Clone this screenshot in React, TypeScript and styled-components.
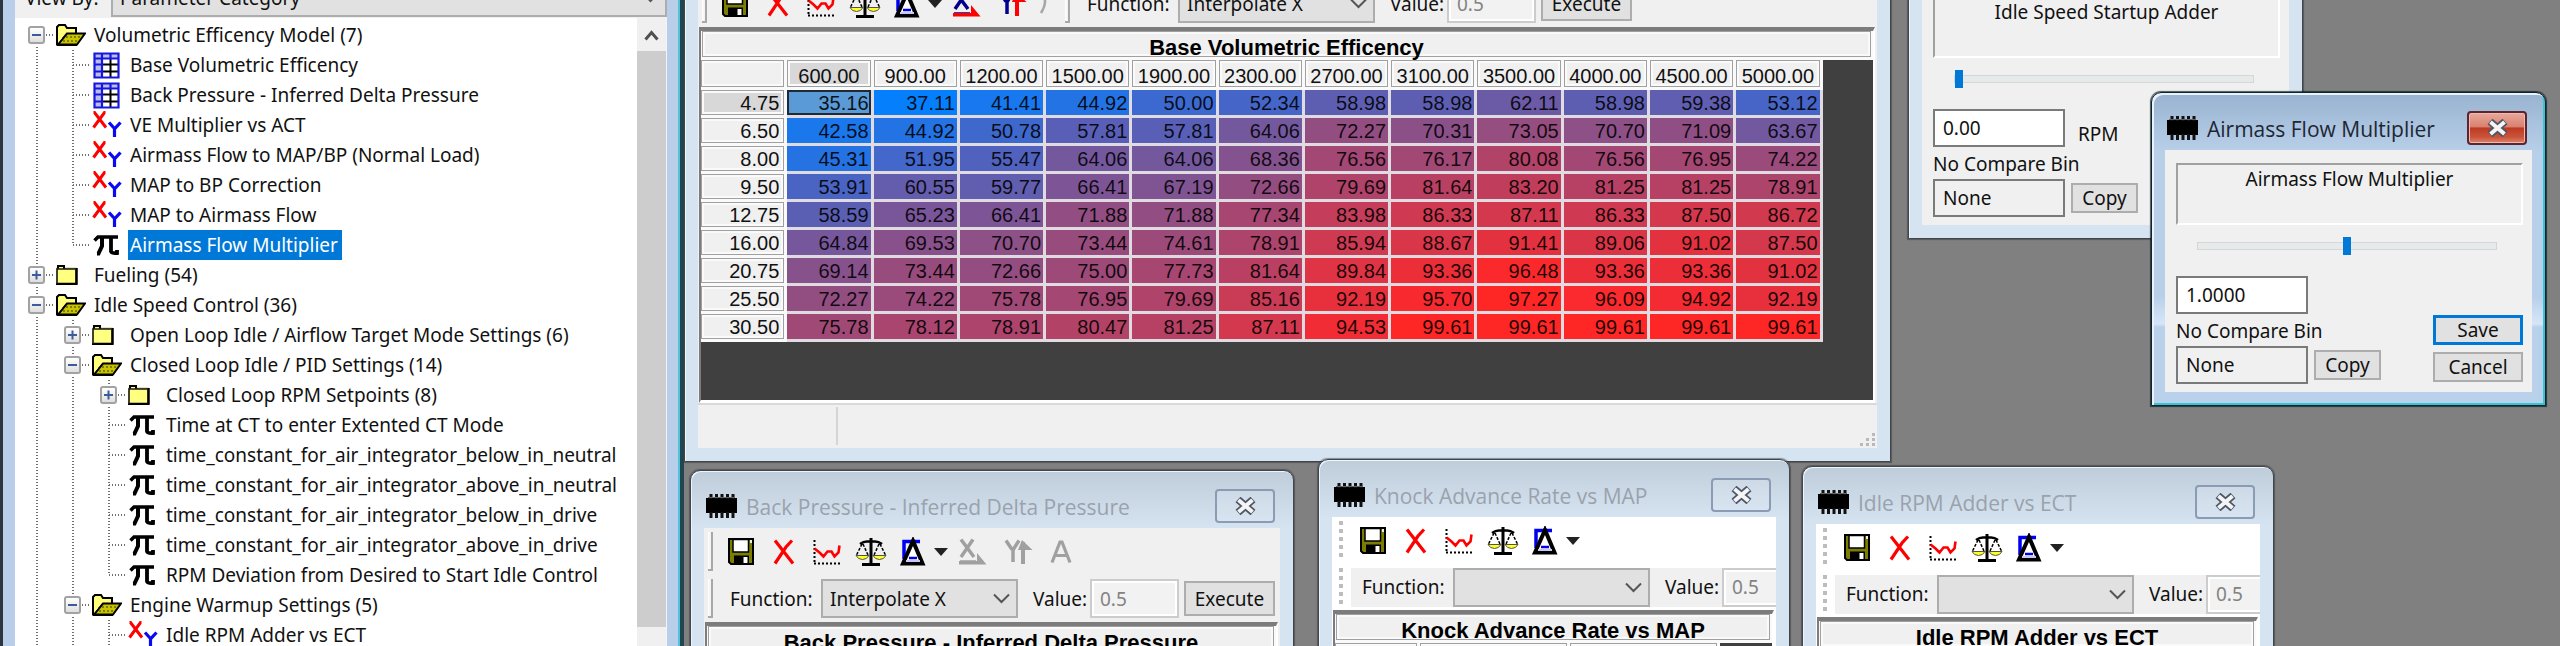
import React from "react";
import styled, { createGlobalStyle, css } from "styled-components";

const uiFont = `"Noto Sans", "Open Sans", sans-serif`;
const titleFont = `"Open Sans", "Noto Sans", sans-serif`;
const gridFont = `"Liberation Sans", Arial, sans-serif`;

const Global = createGlobalStyle`
  *, *::before, *::after { box-sizing: border-box; }
  body { margin: 0; background: #808080; font: 19px/24px ${uiFont}; color: #111; }
  button, input, select { font: inherit; color: inherit; margin: 0; }
`;

/* ---------- shell ---------- */

const Shell = styled.div`
  display: flex;
  height: 100vh;
  overflow: hidden;
`;

const Sidebar = styled.aside`
  flex: 0 0 684px;
  display: flex;
  padding: 0 13px 0 12px;
  background: #b9cfe9;
  border-left: 3px solid #2d3640;
  border-right: 4px solid #24454f;
  box-shadow: inset -2px 0 0 #4fc3d9;
  overflow: hidden;
`;

const SidebarBody = styled.div`
  flex: 1;
  display: flex;
  flex-direction: column;
  min-width: 0;
  background: #fff;
`;

const ViewBar = styled.div`
  display: flex;
  align-items: center;
  gap: 11px;
  height: 40px;
  margin-top: -22px;
  padding-left: 10px;
  padding-bottom: 1px;
  background: #f0f0f0;
`;

const ViewLabel = styled.label`
  flex: 0 0 75px;
  white-space: nowrap;
`;

const Workspace = styled.main`
  flex: 1;
  position: relative;
  overflow: hidden;
  background: #808080;
`;

/* ---------- tree ---------- */

const TreeArea = styled.div`
  flex: 1;
  display: flex;
  min-height: 0;
  overflow: hidden;
`;

const TreeList = styled.ul`
  flex: 1;
  min-width: 0;
  margin: 0;
  padding: 2px 0 0 4px;
  list-style: none;
  overflow: hidden;
`;

const TreeRow = styled.li`
  display: flex;
  height: 30px;
  white-space: nowrap;
`;

type Guide = "none" | "full" | "top" | "bottom";

const dotsV = "repeating-linear-gradient(to bottom, #6f6f6f 0 1px, transparent 1px 3px)";
const dotsH = "repeating-linear-gradient(to right, #6f6f6f 0 1px, transparent 1px 3px)";

const GuideCell = styled.span<{ $line: Guide; $branch?: boolean }>`
  flex: 0 0 36px;
  display: flex;
  align-items: center;
  justify-content: center;
  padding-right: 1px;
  background-repeat: no-repeat;
  ${(p) => {
    const size = p.$line === "full" ? "2px 100%" : p.$line === "none" ? "0 0" : "2px 50%";
    const pos = p.$line === "bottom" ? "17px 100%" : "17px 0";
    return css`
      background-image: ${dotsV}, ${dotsH};
      background-size: ${size}, ${p.$branch ? "18px 2px" : "0 0"};
      background-position: ${pos}, 18px 14px;
    `;
  }}
`;

const Expander = styled.button`
  display: grid;
  place-items: center;
  width: 17px;
  height: 18px;
  padding: 0;
  border: 2px solid #a2a2a2;
  border-radius: 3px;
  background: linear-gradient(#fff, #dedede);
  box-shadow: 0 0 0 1px #fff;
`;

const IconSlot = styled.span<{ $wide?: boolean }>`
  flex: 0 0 37px;
  display: flex;
  align-items: center;
  padding-left: ${(p) => (p.$wide ? 1 : 2)}px;
`;

const TreeLabel = styled.span<{ $selected?: boolean }>`
  height: 30px;
  line-height: 30px;
  padding: 0 4px 0 2px;
  ${(p) => p.$selected && css`background: #0078d7; color: #fff;`}
`;

const ScrollTrack = styled.div`
  flex: 0 0 30px;
  display: flex;
  flex-direction: column;
  border-right: 1px solid #f4f4f4;
  background: #f0f0f0;
`;

const ScrollUp = styled.button`
  display: grid;
  place-items: center;
  height: 33px;
  padding: 0;
  border: 0;
  background: #f0f0f0;
`;

const ScrollThumb = styled.div`
  flex: 1;
  margin-bottom: 19px;
  background: #cdcdcd;
`;

/* ---------- windows ---------- */

const WindowFrame = styled.section<{ $x: number; $y: number; $w: number; $active?: boolean }>`
  position: absolute;
  left: ${(p) => p.$x}px;
  top: ${(p) => p.$y}px;
  width: ${(p) => p.$w}px;
  padding: 0 13px 13px;
  border: 1px solid #3f464e;
  border-radius: 10px 10px 0 0;
  background: linear-gradient(#bfcddb, #d6e4f2 58px);
  box-shadow: inset 1px 1px 0 #eef5fb, 0 0 1px 1px rgba(50, 50, 50, 0.5);
  ${(p) =>
    p.$active &&
    css`
      background: linear-gradient(#98b3d0, #b8cfe9 58px, #b8cfe9 65%, #d6e6f8 74%, #b9d1ea 75%);
      border: 1px solid #10242a;
      box-shadow: inset 2px 2px 0 #e8f2fa, inset -2px -2px 0 #35c6d6, 0 0 1px 1px rgba(0, 20, 30, 0.7);
    `}
`;

const TitleBar = styled.header`
  display: flex;
  align-items: center;
  height: 57px;
  padding: 13px 5px 0 2px;
`;

const WindowTitle = styled.h1<{ $active?: boolean }>`
  flex: 1;
  margin: 2px 0 0 9px;
  font: 400 21px/28px ${titleFont};
  white-space: nowrap;
  color: ${(p) => (p.$active ? "#1d2733" : "#9aa2ac")};
`;

const CloseButton = styled.button<{ $active?: boolean }>`
  display: grid;
  place-items: center;
  width: 60px;
  height: 34px;
  padding: 0;
  border: 2px solid #8b9bb4;
  border-radius: 4px;
  background: rgba(255, 255, 255, 0.12);
  ${(p) =>
    p.$active &&
    css`
      border-color: #5e2430;
      background: linear-gradient(#e8a99c 0, #d9806f 46%, #bd3a22 50%, #c9543a 80%, #dc8468 100%);
      box-shadow: inset 0 0 0 1px #eebab0;
    `}
`;

const WindowBody = styled.div<{ $white?: boolean }>`
  background: ${(p) => (p.$white ? "#fff" : "#f0f0f0")};
  overflow: hidden;
`;

/* ---------- toolbars ---------- */

const ToolRow = styled.div<{ $compact?: boolean }>`
  display: flex;
  align-items: center;
  height: ${(p) => (p.$compact ? 46 : 47)}px;
  white-space: nowrap;
`;

const Gripper = styled.span<{ $dotted?: boolean }>`
  flex: none;
  align-self: center;
  height: 39px;
  ${(p) =>
    p.$dotted
      ? css`
          width: 4px;
          margin: 0 8px 0 7px;
          background: repeating-linear-gradient(to bottom, #bdbdbd 0 4px, transparent 4px 8px);
        `
      : css`
          width: 5px;
          margin: 0 6px 0 4px;
          border: solid #a8a8a8;
          border-width: 0 2px 2px 0;
          background: linear-gradient(to right, #fff, #f0f0f0);
        `}
`;

const ToolButton = styled.button<{ $w?: number }>`
  flex: none;
  display: flex;
  align-items: center;
  justify-content: center;
  width: ${(p) => p.$w ?? 43}px;
  height: 38px;
  padding: 0;
  border: 0;
  background: none;
`;

const FunctionStrip = styled.div<{ $fill?: boolean }>`
  flex: 1 0 auto;
  display: flex;
  align-items: center;
  height: 39px;
  background: #f0f0f0;
  padding-left: 11px;
`;

const FieldLabel = styled.label<{ $w: number; $lead?: number }>`
  flex: none;
  width: ${(p) => p.$w}px;
  margin-left: ${(p) => p.$lead ?? 0}px;
`;

const SelectBox = styled.span<{ $grow?: boolean }>`
  position: relative;
  flex: ${(p) => (p.$grow ? "1" : "0 0 197px")};
  display: flex;
  height: 39px;
  & > select {
    width: 100%;
    padding: 0 7px;
    appearance: none;
    border: 2px solid #adadad;
    border-radius: 0;
    background: #e1e1e1;
    opacity: 1;
  }
  & > svg {
    position: absolute;
    right: 8px;
    top: 14px;
    pointer-events: none;
  }
`;

const ValueInput = styled.input`
  flex: none;
  width: 89px;
  height: 39px;
  padding: 0 8px;
  border: 2px solid #cccccc;
  background: #f2f2f2;
  box-shadow: inset 0 0 0 2px #fff;
  color: #838383;
`;

const PushButton = styled.button<{ $w: number; $h?: number; $primary?: boolean }>`
  flex: none;
  width: ${(p) => p.$w}px;
  height: ${(p) => p.$h ?? 30}px;
  padding: 0;
  line-height: 24px;
  border: ${(p) => (p.$primary ? "3px solid #0078d7" : "2px solid #adadad")};
  background: #e1e1e1;
`;

const ExecuteButton = styled(PushButton)`
  margin-left: 5px;
`;

/* ---------- data grid ---------- */

const GridFrame = styled.div<{ $h: number }>`
  height: ${(p) => p.$h}px;
  margin: 0 2px 0 1px;
  border: solid #fff;
  border-width: 4px 2px 3px 2px;
  border-top-color: #7c7c7c;
  border-left-color: #7c7c7c;
  background: #404040;
  overflow: hidden;
`;

const GridTitle = styled.h2`
  height: 29px;
  margin: 0;
  border: solid #fafafa;
  border-width: 0 2px 3px 1px;
  background: #f0f0f0;
  box-shadow: inset 0 0 0 1px #a0a0a0, inset 0 0 0 3px #fafafa;
  font: 700 22px/34px ${gridFont};
  text-align: center;
  white-space: nowrap;
  color: #000;
`;

const DataTable = styled.table<{ $w: string }>`
  width: ${(p) => p.$w};
  table-layout: fixed;
  border-collapse: separate;
  border-spacing: 0;
  font: 20px/24px ${gridFont};
`;

const headCell = css`
  height: 28px;
  font-weight: 400;
  border: solid #fafafa;
  border-width: 0 3px 3px 0;
  box-shadow: inset 0 0 0 1px #a0a0a0, inset 0 0 0 3px #fafafa;
`;

const ColHead = styled.th<{ $on?: boolean }>`
  ${headCell}
  height: 30px;
  padding: 5px 0 0;
  line-height: 22px;
  text-align: center;
  background: ${(p) => (p.$on ? "#d8d8d8" : "#f0f0f0")};
`;

const RowHead = styled.th<{ $on?: boolean }>`
  ${headCell}
  padding: 1px 5px 0 0;
  text-align: right;
  background: ${(p) => (p.$on ? "#d8d8d8" : "#f0f0f0")};
`;

const ValueCell = styled.td<{ $on?: boolean }>`
  height: 28px;
  padding: 0 2px 0 0;
  border: solid #e0dbe0;
  border-width: 0 3px 3px 0;
  text-align: right;
  color: rgba(0, 0, 0, 0.88);
  ${(p) => p.$on && css`box-shadow: inset 0 0 0 2px #1d2b38;`}
`;

const StatusBar = styled.footer`
  display: flex;
  align-items: flex-end;
  justify-content: space-between;
  height: 45px;
  border-top: 2px solid #d9d9d9;
  background: #f0f0f0;
`;

const StatusCell = styled.span`
  width: 140px;
  height: 38px;
  margin-bottom: 3px;
  border-right: 2px solid #d5d5d5;
`;

/* ---------- value dialogs ---------- */

const DialogBody = styled(WindowBody)`
  padding: 13px 9px 8px 11px;
`;

const Caption = styled.div`
  height: 62px;
  padding-top: 2px;
  border: 2px solid #fff;
  border-top-color: #a0a0a0;
  border-left-color: #a0a0a0;
  text-align: center;
`;

const Slider = styled.input`
  display: block;
  width: 300px;
  height: 18px;
  margin: 12px auto 0 21px;
  appearance: none;
  background: none;
  &::-webkit-slider-runnable-track {
    height: 8px;
    background: #e7eaea;
    border: 1px solid #d6d6d6;
  }
  &::-webkit-slider-thumb {
    appearance: none;
    width: 8px;
    height: 18px;
    margin-top: -6px;
    border-radius: 0;
    background: #0078d7;
  }
`;

const DialogFields = styled.div`
  display: flex;
  justify-content: space-between;
  align-items: flex-end;
  margin-top: 21px;
`;

const FieldColumn = styled.div`
  display: flex;
  flex-direction: column;
`;

const FieldLine = styled.div<{ $gap: number }>`
  display: flex;
  align-items: center;
  gap: ${(p) => p.$gap}px;
`;

const UnitLabel = styled.span`
  padding-top: 12px;
`;

const TextBox = styled.input`
  width: 132px;
  height: 38px;
  padding: 0 8px;
  border: 2px solid #7a7a7a;
  background: #fff;
  &:read-only {
    background: #f0f0f0;
  }
`;

const CompareLabel = styled.label`
  height: 32px;
  line-height: 34px;
`;

const ActionColumn = styled.div`
  display: flex;
  flex-direction: column;
  gap: 7px;
  padding-bottom: 2px;
`;

/* ---------- drawings ---------- */

const ChipIcon = () => (
  <svg width="31" height="24" viewBox="0 0 31 24" aria-hidden="true">
    <path d="M0 4h31v15H0z" fill="#000" />
    <path d="M5 0v5M10.500 0v5M16 0v5M21.500 0v5M27 0v5M5 18v6M10.500 18v6M16 18v6M21.500 18v6M27 18v6" stroke="#111" strokeWidth="3" />
    <path d="M2 3.500h27" stroke="#666" />
  </svg>
);

const CloseGlyph = () => (
  <svg width="23" height="18" viewBox="0 0 23 18" aria-hidden="true">
    <path d="M4 2.500L19 15.500M19 2.500L4 15.500" stroke="#4c5566" strokeWidth="7.500" />
    <path d="M4.500 3L18.500 15M18.500 3L4.500 15" stroke="#f4f4f4" strokeWidth="4" />
  </svg>
);

const Chevron = () => (
  <svg width="17" height="11" viewBox="0 0 17 11" aria-hidden="true">
    <path d="M1 1.500l7.500 7.500L16 1.500" fill="none" stroke="#555" strokeWidth="2" />
  </svg>
);

const OpenFolder = () => (
  <svg width="30" height="22" viewBox="0 0 30 22" aria-hidden="true">
    <path d="M1 20V3l2-2h6l2 3h9v6" fill="#ffff7a" stroke="#000" strokeWidth="2" />
    <path d="M2 20.500L11 9.500h18L21 20.500z" fill="#c9c400" stroke="#000" strokeWidth="2" />
    <path d="M1 20V6l5 8z" fill="#ffff7a" />
    <path d="M10 13h15M7 17h14" stroke="#6b6800" strokeWidth="1.500" strokeDasharray="2 2" />
    <path d="M1 21V3M1 21h20" stroke="#000" strokeWidth="2" />
  </svg>
);

const ClosedFolder = () => (
  <svg width="22" height="20" viewBox="0 0 22 20" aria-hidden="true">
    <path d="M1 19V3.500h19V19z" fill="#ffff80" stroke="#8a8a20" strokeWidth="1.500" />
    <path d="M2 4V1h6v3" fill="#ffff80" stroke="#000" strokeWidth="2" />
    <path d="M20.500 3v16.500M0 19h21.500" stroke="#000" strokeWidth="2.500" />
    <path d="M1 19V4h19" fill="none" stroke="#222" strokeWidth="1.500" />
  </svg>
);

const TableIcon = () => (
  <svg width="27" height="27" viewBox="0 0 27 27" aria-hidden="true">
    <path d="M1 1h25v25H1z" fill="#fff" />
    <path d="M1 1h25v5H1zM1 1h7v25H1z" fill="#b9bde8" />
    <path d="M9 12.500h17M9 19.500h17M17.500 7v19" stroke="#000" strokeWidth="2" />
    <path d="M1.500 1.500h24v24h-24zM1.500 6.500h24M9 1.500v24M17.500 1.500v5M1.500 12.500H9M1.500 19.500H9" fill="none" stroke="#1616e0" strokeWidth="2.200" />
  </svg>
);

const XYIcon = () => (
  <svg width="31" height="28" viewBox="0 0 31 28" aria-hidden="true">
    <path d="M1.500 1.500h1L14 16.500M13.500 1.500h-1L1.500 16.500" fill="none" stroke="#f00" strokeWidth="3" />
    <path d="M17 11.500l5 5.500M28.500 11.500L22.500 18v8" fill="none" stroke="#0a0af0" strokeWidth="3.200" />
  </svg>
);

const PiIcon = () => (
  <svg width="26" height="22" viewBox="0 0 26 22" aria-hidden="true">
    <path d="M1.500 6.500L5 3h20" fill="none" stroke="#000" strokeWidth="3.500" />
    <path d="M9 3v9L5.500 19.500H4" fill="none" stroke="#000" strokeWidth="4" />
    <path d="M18 3v14.500q1 2 6 1.500v-3" fill="none" stroke="#000" strokeWidth="3.800" />
  </svg>
);

const PlusMinus = ({ open }: { open: boolean }) => (
  <svg width="11" height="12" viewBox="0 0 11 12" aria-hidden="true">
    <path d={open ? "M1 6h9" : "M1 6h9M5.500 1.500v9"} stroke="#3d5a9c" strokeWidth="2" />
  </svg>
);

const FloppyIcon = () => (
  <svg width="26" height="27" viewBox="0 0 26 27" aria-hidden="true">
    <path d="M1 1h24v25H3l-2-2z" fill="#7d7d00" stroke="#000" strokeWidth="2" />
    <path d="M5 1.500h15.500V14H5z" fill="#fff" stroke="#000" strokeWidth="1.500" />
    <path d="M22 2h2v3h-2z" fill="#eee" />
    <path d="M6 17.500h15V26H6z" fill="#000" />
    <path d="M15.500 19h4v6h-4z" fill="#fff" />
  </svg>
);

const RedXIcon = () => (
  <svg width="22" height="26" viewBox="0 0 22 26" aria-hidden="true">
    <path d="M2 1.500L20 24.500M19 1.500L13 8 2 24.500" fill="none" stroke="#f00" strokeWidth="3.200" />
  </svg>
);

const GraphIcon = () => (
  <svg width="28" height="27" viewBox="0 0 28 27" aria-hidden="true">
    <path d="M1.500 2v24M1 25.500h27" stroke="#000" strokeWidth="2" strokeDasharray="2 2" />
    <path d="M1.500 10.500l5 4 4 4 4-5h4l3 5 4-4 1-7" fill="none" stroke="#f00" strokeWidth="2.600" />
  </svg>
);

const ScalesIcon = () => (
  <svg width="32" height="29" viewBox="0 0 32 29" aria-hidden="true">
    <path d="M1 18.500h13q-2 4-6.500 4T1 18.500zM18 18.500h13q-2 4-6.500 4t-6.500-4z" fill="#ffff2a" stroke="#554" />
    <path d="M16 1v26M7 27.500h18" stroke="#000" strokeWidth="3" />
    <path d="M5 7q4-3 8-2.500h6q4-.5 8 2.500" fill="none" stroke="#000" strokeWidth="2.500" />
    <path d="M7 7l-5.500 11M8 7l5 11M24 7l-5 11M25 7l5.500 11" stroke="#000" strokeWidth="1.500" strokeDasharray="3 1.500" />
  </svg>
);

const DeltaIcon = () => (
  <svg width="27" height="29" viewBox="0 0 27 29" aria-hidden="true">
    <path d="M20 4.500H4V22" fill="none" stroke="#0000f0" strokeWidth="3.500" />
    <path d="M3 26.500L13 4l9.500 22.500z" fill="#fff" stroke="#000" strokeWidth="4" />
    <path d="M9 21h8" stroke="#0000f0" strokeWidth="2.500" />
    <path d="M6 24h14" stroke="#c8c8f4" strokeWidth="2" />
    <path d="M11 4l2-4 2 4z" />
  </svg>
);

const DropArrow = () => (
  <svg width="14" height="8" viewBox="0 0 14 8" aria-hidden="true">
    <path d="M0 0h14L7 8z" fill="#222" />
  </svg>
);

const ScaleXIcon = ({ off }: { off?: boolean }) => (
  <svg width="29" height="27" viewBox="0 0 29 27" aria-hidden="true">
    <path d="M3 1.500L16 19M15 1.500L3 19M2 24h16" fill="none" stroke={off ? "#a0a0a0" : "#00008c"} strokeWidth="3.500" />
    <path d="M1 23h18v-8l9.500 11.500H1z" fill={off ? "#a0a0a0" : "#f00"} />
  </svg>
);

const ScaleYIcon = ({ off }: { off?: boolean }) => (
  <svg width="29" height="27" viewBox="0 0 29 27" aria-hidden="true">
    <path d="M2 2.500l6 9M15 2.500L9 12v12" fill="none" stroke={off ? "#a0a0a0" : "#00008c"} strokeWidth="3.500" />
    <path d="M19 4v22" stroke={off ? "#a0a0a0" : "#f00"} strokeWidth="4" />
    <path d="M18 2l10.500 10H14z" fill={off ? "#a0a0a0" : "#f00"} />
  </svg>
);

const LetterIcon = () => (
  <svg width="22" height="24" viewBox="0 0 22 24" aria-hidden="true">
    <path d="M2 22.500L10 2h2l8 20.500M5 15.500h12" fill="none" stroke="#a0a0a0" strokeWidth="3.200" />
  </svg>
);

const CurveIcon = () => (
  <svg width="22" height="24" viewBox="0 0 22 24" aria-hidden="true">
    <path d="M4 1.500Q12 8 4 21" fill="none" stroke="#a6a6a6" strokeWidth="2.500" />
  </svg>
);

const GripDots = () => (
  <svg width="18" height="16" viewBox="0 0 18 16" aria-hidden="true">
    <path d="M13 1h3v3h-3zM7 6h3v3H7zM13 6h3v3h-3zM1 11h3v3H1zM7 11h3v3H7zM13 11h3v3h-3z" fill="#b9b9b9" />
  </svg>
);

/* ---------- data ---------- */

type Kind = "open" | "closed" | "table" | "xy" | "pi";
type Node = { text: string; kind: Kind; guides: Guide[]; selected?: boolean };

const tree: Node[] = [
  { text: "Volumetric Efficency Model (7)", kind: "open", guides: ["bottom"] },
  { text: "Base Volumetric Efficency", kind: "table", guides: ["full", "full"] },
  { text: "Back Pressure - Inferred Delta Pressure", kind: "table", guides: ["full", "full"] },
  { text: "VE Multiplier vs ACT", kind: "xy", guides: ["full", "full"] },
  { text: "Airmass Flow to MAP/BP (Normal Load)", kind: "xy", guides: ["full", "full"] },
  { text: "MAP to BP Correction", kind: "xy", guides: ["full", "full"] },
  { text: "MAP to Airmass Flow", kind: "xy", guides: ["full", "full"] },
  { text: "Airmass Flow Multiplier", kind: "pi", guides: ["full", "top"], selected: true },
  { text: "Fueling (54)", kind: "closed", guides: ["full"] },
  { text: "Idle Speed Control (36)", kind: "open", guides: ["full"] },
  { text: "Open Loop Idle / Airflow Target Mode Settings (6)", kind: "closed", guides: ["full", "full"] },
  { text: "Closed Loop Idle / PID Settings (14)", kind: "open", guides: ["full", "full"] },
  { text: "Closed Loop RPM Setpoints (8)", kind: "closed", guides: ["full", "full", "full"] },
  { text: "Time at CT to enter Extented CT Mode", kind: "pi", guides: ["full", "full", "full"] },
  { text: "time_constant_for_air_integrator_below_in_neutral", kind: "pi", guides: ["full", "full", "full"] },
  { text: "time_constant_for_air_integrator_above_in_neutral", kind: "pi", guides: ["full", "full", "full"] },
  { text: "time_constant_for_air_integrator_below_in_drive", kind: "pi", guides: ["full", "full", "full"] },
  { text: "time_constant_for_air_integrator_above_in_drive", kind: "pi", guides: ["full", "full", "full"] },
  { text: "RPM Deviation from Desired to Start Idle Control", kind: "pi", guides: ["full", "full", "top"] },
  { text: "Engine Warmup Settings (5)", kind: "open", guides: ["full", "full"] },
  { text: "Idle RPM Adder vs ECT", kind: "xy", guides: ["full", "full", "full"] },
];

const nodeIcon: Record<Kind, React.ReactNode> = {
  open: <OpenFolder />,
  closed: <ClosedFolder />,
  table: <TableIcon />,
  xy: <XYIcon />,
  pi: <PiIcon />,
};

const rpm = ["600.00", "900.00", "1200.00", "1500.00", "1900.00", "2300.00", "2700.00", "3100.00", "3500.00", "4000.00", "4500.00", "5000.00"];

const efficiency: [string, number[]][] = [
  ["4.75", [35.16, 37.11, 41.41, 44.92, 50.0, 52.34, 58.98, 58.98, 62.11, 58.98, 59.38, 53.12]],
  ["6.50", [42.58, 44.92, 50.78, 57.81, 57.81, 64.06, 72.27, 70.31, 73.05, 70.7, 71.09, 63.67]],
  ["8.00", [45.31, 51.95, 55.47, 64.06, 64.06, 68.36, 76.56, 76.17, 80.08, 76.56, 76.95, 74.22]],
  ["9.50", [53.91, 60.55, 59.77, 66.41, 67.19, 72.66, 79.69, 81.64, 83.2, 81.25, 81.25, 78.91]],
  ["12.75", [58.59, 65.23, 66.41, 71.88, 71.88, 77.34, 83.98, 86.33, 87.11, 86.33, 87.5, 86.72]],
  ["16.00", [64.84, 69.53, 70.7, 73.44, 74.61, 78.91, 85.94, 88.67, 91.41, 89.06, 91.02, 87.5]],
  ["20.75", [69.14, 73.44, 72.66, 75.0, 77.73, 81.64, 89.84, 93.36, 96.48, 93.36, 93.36, 91.02]],
  ["25.50", [72.27, 74.22, 75.78, 76.95, 79.69, 85.16, 92.19, 95.7, 97.27, 96.09, 94.92, 92.19]],
  ["30.50", [75.78, 78.12, 78.91, 80.47, 81.25, 87.11, 94.53, 99.61, 99.61, 99.61, 99.61, 99.61]],
];

const stops: [number, number, number, number][] = [
  [37, 6, 127, 253],
  [45, 36, 115, 228],
  [50, 60, 105, 208],
  [59, 93, 94, 178],
  [64, 116, 88, 158],
  [72, 146, 78, 130],
  [79, 172, 68, 108],
  [86, 206, 58, 82],
  [93.4, 236, 46, 56],
  [97, 255, 40, 42],
];

function heat(v: number) {
  if (v <= stops[0][0]) return `rgb(${stops[0].slice(1).join(",")})`;
  for (let i = 1; i < stops.length; i++) {
    if (v <= stops[i][0]) {
      const a = stops[i - 1];
      const b = stops[i];
      const t = (v - a[0]) / (b[0] - a[0]);
      return `rgb(${[1, 2, 3].map((k) => Math.round(a[k] + (b[k] - a[k]) * t)).join(",")})`;
    }
  }
  return "rgb(255,38,38)";
}

/* ---------- parts ---------- */

function Tree() {
  return (
    <TreeList>
      {tree.map((n) => {
        const folder = n.kind === "open" || n.kind === "closed";
        const last = n.guides.length - 1;
        return (
          <TreeRow key={n.text}>
            {n.guides.map((g, i) => (
              <GuideCell key={i} $line={g} $branch={i === last}>
                {i === last && folder && (
                  <Expander type="button" aria-label={n.text}>
                    <PlusMinus open={n.kind === "open"} />
                  </Expander>
                )}
              </GuideCell>
            ))}
            <IconSlot $wide={folder || n.kind === "xy"}>{nodeIcon[n.kind]}</IconSlot>
            <TreeLabel $selected={n.selected}>{n.text}</TreeLabel>
          </TreeRow>
        );
      })}
    </TreeList>
  );
}

type WinProps = {
  title: string;
  x: number;
  y: number;
  w: number;
  active?: boolean;
  children: React.ReactNode;
};

function Win({ title, x, y, w, active, children }: WinProps) {
  return (
    <WindowFrame $x={x} $y={y} $w={w} $active={active}>
      <TitleBar>
        <ChipIcon />
        <WindowTitle $active={active}>{title}</WindowTitle>
        <CloseButton type="button" aria-label="Close" $active={active}>
          <CloseGlyph />
        </CloseButton>
      </TitleBar>
      {children}
    </WindowFrame>
  );
}

function BasicTools() {
  return (
    <>
      <ToolButton type="button" aria-label="Save"><FloppyIcon /></ToolButton>
      <ToolButton type="button" aria-label="Discard"><RedXIcon /></ToolButton>
      <ToolButton type="button" aria-label="Graph" $w={44}><GraphIcon /></ToolButton>
      <ToolButton type="button" aria-label="Compare" $w={44}><ScalesIcon /></ToolButton>
      <ToolButton type="button" aria-label="Difference" $w={41}><DeltaIcon /></ToolButton>
      <ToolButton type="button" aria-label="Difference options" $w={14}><DropArrow /></ToolButton>
    </>
  );
}

function ScaleTools({ off }: { off?: boolean }) {
  return (
    <>
      <ToolButton type="button" aria-label="Scale X" $w={49}><ScaleXIcon off={off} /></ToolButton>
      <ToolButton type="button" aria-label="Scale Y"><ScaleYIcon off={off} /></ToolButton>
      <ToolButton type="button" aria-label="Auto" $w={off ? 41 : 27}>{off ? <LetterIcon /> : <CurveIcon />}</ToolButton>
    </>
  );
}

function FunctionFields({ id, value }: { id: string; value?: string }) {
  return (
    <>
      <FieldLabel htmlFor={`${id}-fn`} $w={91}>Function:</FieldLabel>
      <SelectBox>
        <select id={`${id}-fn`} defaultValue={value ?? ""}>
          <option>{value ?? ""}</option>
        </select>
        <Chevron />
      </SelectBox>
      <FieldLabel htmlFor={`${id}-val`} $w={57} $lead={15}>Value:</FieldLabel>
      <ValueInput id={`${id}-val`} defaultValue="0.5" disabled />
    </>
  );
}

function CurveWindow({ title, id, x, y }: { title: string; id: string; x: number; y: number }) {
  return (
    <Win title={title} x={x} y={y} w={472}>
      <WindowBody $white>
        <ToolRow>
          <Gripper $dotted />
          <BasicTools />
        </ToolRow>
        <ToolRow $compact>
          <Gripper $dotted />
          <FunctionStrip>
            <FunctionFields id={id} />
          </FunctionStrip>
        </ToolRow>
        <GridFrame $h={200}>
          <GridTitle>{title}</GridTitle>
          <DataTable $w="88%">
            <colgroup>
              <col width="22%" />
              <col width="39%" />
              <col width="39%" />
            </colgroup>
            <tbody>
              <tr>
                <ColHead />
                <ColHead />
                <ColHead />
              </tr>
            </tbody>
          </DataTable>
        </GridFrame>
      </WindowBody>
    </Win>
  );
}

type DialogProps = {
  id: string;
  title: string;
  x: number;
  y: number;
  value: string;
  level: number;
  unit?: string;
  active?: boolean;
  actions?: boolean;
};

function ValueDialog({ id, title, x, y, value, level, unit, active, actions }: DialogProps) {
  return (
    <Win title={title} x={x} y={y} w={395} active={active}>
      <DialogBody>
        <Caption>{title}</Caption>
        <Slider type="range" min={0} max={100} defaultValue={level} aria-label={title} />
        <DialogFields>
          <FieldColumn>
            <FieldLine $gap={13}>
              <TextBox aria-label={title} defaultValue={value} />
              {unit && <UnitLabel>{unit}</UnitLabel>}
            </FieldLine>
            <CompareLabel htmlFor={`${id}-cmp`}>No Compare Bin</CompareLabel>
            <FieldLine $gap={6}>
              <TextBox id={`${id}-cmp`} readOnly value="None" />
              <PushButton type="button" $w={67}>Copy</PushButton>
            </FieldLine>
          </FieldColumn>
          {actions && (
            <ActionColumn>
              <PushButton type="button" $w={90} $primary>Save</PushButton>
              <PushButton type="button" $w={90}>Cancel</PushButton>
            </ActionColumn>
          )}
        </DialogFields>
      </DialogBody>
    </Win>
  );
}

export default function App() {
  return (
    <Shell>
      <Global />
      <Sidebar>
        <SidebarBody>
          <ViewBar>
            <ViewLabel htmlFor="view-by">View By:</ViewLabel>
            <SelectBox $grow>
              <select id="view-by" defaultValue="Parameter Category">
                <option>Parameter Category</option>
              </select>
              <Chevron />
            </SelectBox>
          </ViewBar>
          <TreeArea>
            <Tree />
            <ScrollTrack>
              <ScrollUp type="button" aria-label="Scroll up">
                <svg width="15" height="12" viewBox="0 0 15 12" aria-hidden="true">
                  <path d="M1.500 10.500l6-7 6 7" fill="none" stroke="#505050" strokeWidth="3" />
                </svg>
              </ScrollUp>
              <ScrollThumb />
            </ScrollTrack>
          </TreeArea>
        </SidebarBody>
      </Sidebar>

      <Workspace>
        <Win title="Base Volumetric Efficency" x={0} y={-78} w={1207}>
          <WindowBody>
            <ToolRow>
              <Gripper />
              <BasicTools />
              <ScaleTools />
              <Gripper />
              <FunctionStrip>
                <FunctionFields id="base" value="Interpolate X" />
                <ExecuteButton type="button" $w={91} $h={35}>Execute</ExecuteButton>
              </FunctionStrip>
            </ToolRow>
            <GridFrame $h={376}>
              <GridTitle>Base Volumetric Efficency</GridTitle>
              <DataTable $w="95.7%">
                <thead>
                  <tr>
                    <ColHead />
                    {rpm.map((r, i) => (
                      <ColHead key={r} scope="col" $on={i === 0}>{r}</ColHead>
                    ))}
                  </tr>
                </thead>
                <tbody>
                  {efficiency.map(([load, values], r) => (
                    <tr key={load}>
                      <RowHead scope="row" $on={r === 0}>{load}</RowHead>
                      {values.map((v, c) => {
                        const on = r === 0 && c === 0;
                        return (
                          <ValueCell key={c} $on={on} style={{ backgroundColor: on ? "#5a9ad6" : heat(v) }}>
                            {v.toFixed(2)}
                          </ValueCell>
                        );
                      })}
                    </tr>
                  ))}
                </tbody>
              </DataTable>
            </GridFrame>
            <StatusBar>
              <StatusCell />
              <GripDots />
            </StatusBar>
          </WindowBody>
        </Win>

        <Win title="Back Pressure - Inferred Delta Pressure" x={6} y={470} w={604}>
          <WindowBody>
            <ToolRow>
              <Gripper />
              <BasicTools />
              <ScaleTools off />
            </ToolRow>
            <ToolRow>
              <Gripper />
              <FunctionStrip>
                <FunctionFields id="back" value="Interpolate X" />
                <ExecuteButton type="button" $w={91} $h={35}>Execute</ExecuteButton>
              </FunctionStrip>
            </ToolRow>
            <GridFrame $h={200}>
              <GridTitle>Back Pressure - Inferred Delta Pressure</GridTitle>
            </GridFrame>
          </WindowBody>
        </Win>

        <CurveWindow title="Knock Advance Rate vs MAP" id="knock" x={634} y={459} />
        <CurveWindow title="Idle RPM Adder vs ECT" id="idle" x={1118} y={466} />

        <ValueDialog id="startup" title="Idle Speed Startup Adder" x={1224} y={-75} value="0.00" level={0} unit="RPM" />
        <ValueDialog id="airmass" title="Airmass Flow Multiplier" x={1467} y={92} value="1.0000" level={50} active actions />
      </Workspace>
    </Shell>
  );
}
